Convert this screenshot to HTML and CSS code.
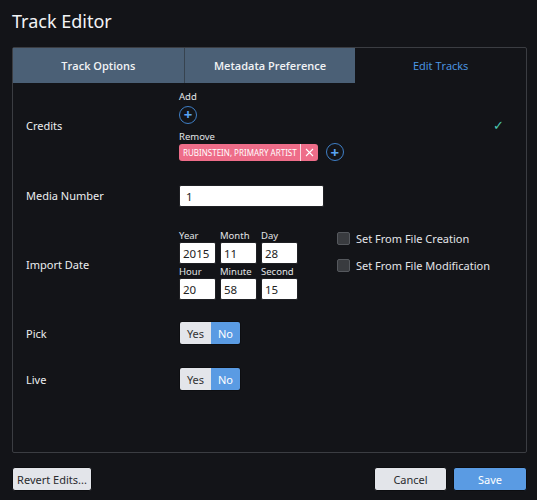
FILE: index.html
```html
<!DOCTYPE html>
<html>
  <head>
    <title>Track Editor</title>
    <link rel="stylesheet" href="styles.css">
  </head>
  <body>

    <h1 class="title">Track Editor</h1>

    <div class="panel">
      <div class="tabs">
        <div class="tab">Track Options</div>
        <div class="tab">Metadata Preference</div>
        <div class="tab active">Edit Tracks</div>
      </div>

      <div class="form">

        <div class="label">Credits</div>
        <div class="field credits">
          <div class="credit-lists">
            <div class="mini">Add</div>
            <div class="addbtn">+</div>
            <div class="mini gap">Remove</div>
            <div class="tagline">
              <span class="tag"><span class="tagtext">RUBINSTEIN, PRIMARY ARTIST</span><span class="tagx"><svg width="9" height="9" viewBox="0 0 9 9"><path d="M1 1 L8 8 M8 1 L1 8" stroke="#fff" stroke-width="1.1" fill="none"/></svg></span></span>
              <span class="addbtn">+</span>
            </div>
          </div>
          <span class="check">&#x2713;</span>
        </div>

        <div class="label">Media Number</div>
        <div class="field media"><input class="text wide" value="1"></div>

        <div class="label">Import Date</div>
        <div class="field date">
          <div class="dategrid">
            <div class="cell"><div class="mini">Year</div><input class="text small" value="2015"></div>
            <div class="cell"><div class="mini">Month</div><input class="text small" value="11"></div>
            <div class="cell"><div class="mini">Day</div><input class="text small" value="28"></div>
            <div class="cell"><div class="mini">Hour</div><input class="text small" value="20"></div>
            <div class="cell"><div class="mini">Minute</div><input class="text small" value="58"></div>
            <div class="cell"><div class="mini">Second</div><input class="text small" value="15"></div>
          </div>
          <div class="checks">
            <label class="checkrow"><span class="box"></span>Set From File Creation</label>
            <label class="checkrow"><span class="box"></span>Set From File Modification</label>
          </div>
        </div>

        <div class="label">Pick</div>
        <div class="field"><span class="toggle"><span class="yes">Yes</span><span class="no">No</span></span></div>

        <div class="label">Live</div>
        <div class="field"><span class="toggle"><span class="yes">Yes</span><span class="no">No</span></span></div>

      </div>
    </div>

    <div class="footer">
      <button class="btn revert">Revert Edits...</button>
      <span class="spacer"></span>
      <button class="btn cancel">Cancel</button>
      <button class="btn save">Save</button>
    </div>

  </body>
</html>
```

FILE: styles.css
```css
body            { margin: 0; padding: 9px 10px 0 12px; background-color: #131418; color: #e6e7ea; font-family: "Noto Sans", "Open Sans", sans-serif; }

.title          { margin: 0 0 13px 0; font-size: 18px; font-weight: normal; line-height: 25px; color: #f2f3f5; }

.panel          { border: 1px solid #3b3d42; border-radius: 2px; height: 404px; }

.tabs           { display: flex; height: 35px; }
.tab            { flex: 1; display: flex; align-items: center; justify-content: center; background-color: #4b6076; color: #f1f3f5; font-family: "Open Sans", "Noto Sans", sans-serif; font-size: 11px; font-weight: 600; }
.tab + .tab     { border-left: 1px solid #37434f; }
.tab.active     { background-color: transparent; color: #4d9be8; font-weight: normal; border-left: none; }

.form           { display: grid; grid-template-columns: 153px 1fr; row-gap: 22px; align-items: center; padding: 7px 0 0 13px; }
.label          { font-size: 11px; color: #eceef0; }
.field          { display: flex; align-items: center; }
.field.media    { padding-top: 2px; }

.mini           { font-size: 9.5px; line-height: 13px; color: #e2e4e7; }
.mini.gap       { margin-top: 5px; }

.credits        { justify-content: space-between; padding-right: 22px; }
.check          { color: #4bc8b0; font-size: 13px; margin-top: -1px; }

.addbtn         { display: inline-flex; align-items: center; justify-content: center; box-sizing: border-box; width: 18px; height: 18px; border: 1px solid #3f7fc6; border-radius: 50%; color: #5aa4f2; font-size: 15px; font-weight: bold; line-height: 1; }

.tagline        { display: flex; align-items: center; }
.tag            { display: inline-flex; height: 17px; background-color: #ee6d89; border-radius: 3px; color: #fff; font-size: 8px; align-items: stretch; margin-right: 8px; }
.tagtext        { display: flex; align-items: center; padding: 0 3px 0 4px; }
.tagx           { display: flex; align-items: center; border-left: 1px solid #fbdbe2; padding: 0 4px; }

.text           { box-sizing: border-box; height: 22px; border: 1px solid #1f2024; border-radius: 2px; background-color: #fff; color: #222; font-family: inherit; font-size: 11.5px; padding: 0 6px; outline: none; margin: 0; }
.wide           { width: 145px; }
.small          { display: block; width: 37px; height: 22px; padding: 0 3px; }

.date           { align-items: flex-start; margin-bottom: -1px; }
.dategrid       { display: grid; grid-template-columns: repeat(3, 37px); column-gap: 4px; row-gap: 1px; }
.checks         { margin-left: 39px; margin-top: 2px; }
.checkrow       { display: flex; align-items: center; font-size: 11px; line-height: 15px; color: #e3e5e8; margin-bottom: 12px; }
.box            { box-sizing: border-box; width: 13px; height: 13px; border: 1px solid #55585d; border-radius: 2px; background-color: #393b3f; margin-right: 6px; }

.toggle         { display: inline-flex; box-sizing: border-box; height: 24px; border: 1px solid #0d0e11; border-radius: 3px; overflow: hidden; font-size: 11px; }
.toggle span    { display: flex; align-items: center; justify-content: center; }
.yes            { width: 31px; background-color: #e3e5ea; color: #333; }
.no             { width: 29px; background-color: #5a9be3; color: #fff; }

.footer         { display: flex; margin-top: 14px; }
.spacer         { flex: 1; }
.btn            { height: 24px; border: 1px solid #0c0d10; border-radius: 3px; background-color: #e3e5ea; color: #2a2b2e; font-family: inherit; font-size: 11px; padding: 0; }
.revert         { width: 80px; }
.cancel         { width: 73px; margin-right: 6px; }
.save           { width: 74px; background-color: #5a9be3; color: #fff; }
```
